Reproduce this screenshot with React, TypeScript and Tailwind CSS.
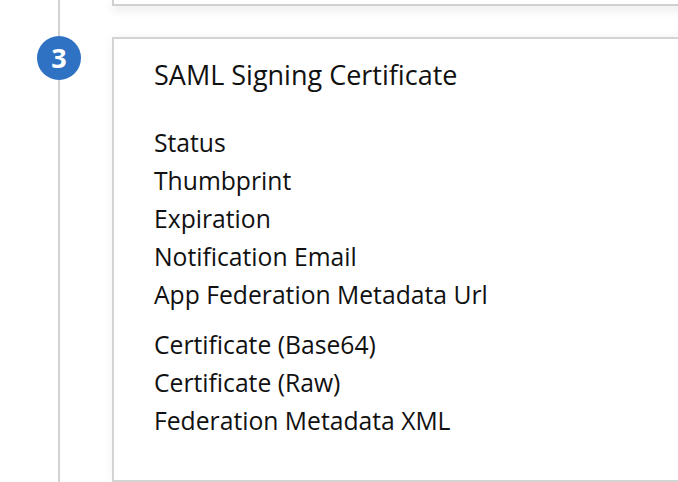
import React from "react";

const groupA = ["Status", "Thumbprint", "Expiration", "Notification Email", "App Federation Metadata Url"];
const groupB = ["Certificate (Base64)", "Certificate (Raw)", "Federation Metadata XML"];

export default function App() {
  return (
    <div
      className="w-[678px] h-[482px] overflow-hidden bg-white flex"
      style={{ fontFamily: '"Open Sans", "Noto Sans", sans-serif' }}
    >
      <div className="ml-[37px] w-[44px] shrink-0 flex flex-col items-center">
        <div className="w-[2px] h-[36px] bg-[#d2d2d2]" />
        <div className="w-[44px] h-[44px] rounded-full bg-[#2f72c3] flex items-center justify-center text-white text-[27px] font-bold leading-none pb-[1px]">
          3
        </div>
        <div className="w-[2px] flex-1 bg-[#d2d2d2]" />
      </div>
      <div className="ml-[31px] w-[620px] shrink-0 flex flex-col">
        <div className="h-[6px] border-x-2 border-b-2 border-[#d0d0d0] bg-white shadow-[0_4px_10px_rgba(0,0,0,0.10)]" />
        <div className="mt-[31px] flex-1 border-2 border-[#d4d4d4] bg-white shadow-[0_0_10px_rgba(0,0,0,0.05)] pl-[40px] pt-[21px] text-[#111]">
          <div className="text-[27px] leading-[30px]">SAML Signing Certificate</div>
          <div className="mt-[34px] flex flex-col text-[24.7px] leading-[38px]">
            {groupA.map((t) => (
              <div key={t}>{t}</div>
            ))}
          </div>
          <div className="mt-[12px] flex flex-col text-[24.7px] leading-[38px]">
            {groupB.map((t) => (
              <div key={t}>{t}</div>
            ))}
          </div>
        </div>
      </div>
    </div>
  );
}
